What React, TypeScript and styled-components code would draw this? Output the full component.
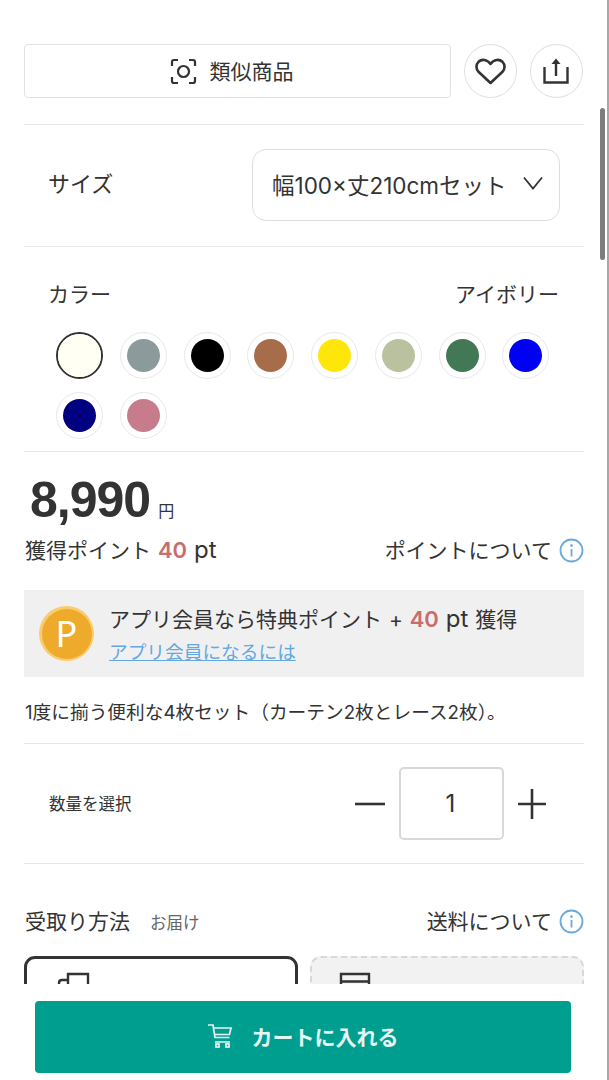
import styled, { createGlobalStyle } from "styled-components";

const colors = [
  "#fffff4",
  "#8d9a9b",
  "#000000",
  "#a76c49",
  "#ffe60a",
  "#bac19f",
  "#437857",
  "#0000f5",
  "#000080",
  "#c67c8d",
];

const InfoIcon = () => (
  <svg width="25" height="25" viewBox="0 0 25 25" fill="none">
    <circle cx="12.5" cy="12.5" r="11" stroke="#6aa9dc" strokeWidth="1.8" />
    <circle cx="12.5" cy="7.6" r="1.3" fill="#6aa9dc" />
    <path d="M12.5 11v7.5" stroke="#6aa9dc" strokeWidth="1.8" />
  </svg>
);

const App = () => {
  return (
    <Page>
      <GlobalStyle />
      <Main>
        <Toolbar>
          <SimilarButton>
            <svg width="27" height="27" viewBox="0 0 27 27" fill="none" stroke="#333" strokeWidth="2.2">
              <path d="M8 2H4Q2 2 2 4v4M19 2h4q2 0 2 2v4M2 19v4q0 2 2 2h4M25 19v4q0 2-2 2h-4" />
              <circle cx="13.5" cy="13.500" r="5.5" />
            </svg>
            類似商品
          </SimilarButton>
          <RoundButton>
            <svg width="31" height="27" viewBox="0 0 31 27" fill="none" stroke="#333" strokeWidth="2.6" strokeLinejoin="round">
              <path d="M15.500 25 3.500 13.800C.8 11 .8 6.500 3.500 3.800c3-2.800 8.500-2.800 12 2.200 3.500-5 9-5 12-2.200 2.700 2.700 2.700 7.200 0 10Z" />
            </svg>
          </RoundButton>
          <ShareButton>
            <svg width="26" height="26" viewBox="0 0 26 26" fill="none" stroke="#333" strokeWidth="2.400">
              <path d="M1.500 9v15.500h23V9M13 18V3" />
              <path d="M13 0.500 17.500 6h-9Z" fill="#333" stroke="none" />
            </svg>
          </ShareButton>
        </Toolbar>

        <SizeRow>
          <SizeLabel>サイズ</SizeLabel>
          <SizeSelect>
            幅100×丈210cmセット
            <svg width="20" height="14" viewBox="0 0 20 14" fill="none" stroke="#333" strokeWidth="1.800">
              <path d="M1 1.500 10 12.500 19 1.500" />
            </svg>
          </SizeSelect>
        </SizeRow>

        <ColorSection>
          <ColorHead>
            <span>カラー</span>
            <span>アイボリー</span>
          </ColorHead>
          <Swatches>
            {colors.map((color, i) => (
              <Swatch key={color} $selected={i === 0}>
                <SwatchDot $color={color} $selected={i === 0} />
              </Swatch>
            ))}
          </Swatches>
        </ColorSection>

        <PriceSection>
          <Price>
            8,990<Yen>円</Yen>
          </Price>
          <PointRow>
            <span>
              獲得ポイント <Red>40</Red> <Unit>pt</Unit>
            </span>
            <InfoLink>
              ポイントについて
              <InfoIcon />
            </InfoLink>
          </PointRow>
          <AppBox>
            <Coin>
              <CoinInner>P</CoinInner>
            </Coin>
            <AppText>
              <span>
                アプリ会員なら特典ポイント + <Red>40</Red> <Unit>pt</Unit> 獲得
              </span>
              <AppLink>アプリ会員になるには</AppLink>
            </AppText>
          </AppBox>
          <Note>1度に揃う便利な4枚セット（カーテン2枚とレース2枚）。</Note>
        </PriceSection>

        <QuantityRow>
          <QuantityLabel>数量を選択</QuantityLabel>
          <Stepper>
            <svg width="32" height="30" viewBox="0 0 32 30" stroke="#333" strokeWidth="2.600">
              <path d="M1 15h30" />
            </svg>
            <QuantityBox>1</QuantityBox>
            <svg width="30" height="32" viewBox="0 0 30 32" stroke="#333" strokeWidth="2.600">
              <path d="M1 16h28M15 1v30" />
            </svg>
          </Stepper>
        </QuantityRow>

        <DeliverySection>
          <DeliveryHead>
            <DeliveryTitle>
              受取り方法<small>お届け</small>
            </DeliveryTitle>
            <InfoLink>
              送料について
              <InfoIcon />
            </InfoLink>
          </DeliveryHead>
          <Cards>
            <Card>
              <svg width="34" height="40" viewBox="0 0 34 40" fill="none" stroke="#333" strokeWidth="2.400">
                <path d="M2 40V11q0-3 3-3h6M11 40V2h20v38" />
              </svg>
            </Card>
            <Card $disabled>
              <svg width="34" height="40" viewBox="0 0 34 40" fill="none" stroke="#333" strokeWidth="2.400">
                <path d="M3 40V3h28v37M3 10.500h28" />
              </svg>
            </Card>
          </Cards>
        </DeliverySection>
      </Main>

      <Footer>
        <CartButton>
          <svg width="24" height="24" viewBox="0 0 24 24" fill="none" stroke="#e6f5f3" strokeWidth="1.700">
            <path d="M0 1h5l2 12.500h14.500M6 4h17l-1.500 6.500H7M7 18h15" />
            <rect x="8" y="20" width="3" height="3" />
            <rect x="18" y="20" width="3" height="3" />
          </svg>
          カートに入れる
        </CartButton>
      </Footer>
      <Scrollbar />
    </Page>
  );
};

export default App;

const GlobalStyle = createGlobalStyle`
  html, body {
    margin: 0;
    padding: 0;
    background: #fff;
  }
  * {
    box-sizing: border-box;
  }
`;

const Page = styled.div`
  position: relative;
  width: 609px;
  height: 1080px;
  display: flex;
  flex-direction: column;
  overflow: hidden;
  background: #fff;
  color: #333;
  font-family: "Inter", "Noto Sans CJK JP", sans-serif;
  border-right: 2px solid #a8a8a8;
`;

const Main = styled.main`
  height: 984px;
  overflow: hidden;
  padding: 44px 24px 0 24px;
  width: 607px;
`;

const Toolbar = styled.div`
  display: flex;
  align-items: stretch;
  height: 54px;
  gap: 13px;
  width: 560px;
`;

const SimilarButton = styled.button`
  width: 427px;
  display: flex;
  align-items: center;
  justify-content: center;
  gap: 13px;
  padding: 0 12px 3px 0;
  background: #fff;
  border: 1px solid #e2e2e2;
  border-radius: 4px;
  color: #333;
  font: 400 21px "Noto Sans CJK JP", sans-serif;

  svg {
    margin-top: 3px;
  }
`;

const RoundButton = styled.button`
  width: 53px;
  display: flex;
  align-items: center;
  justify-content: center;
  padding: 0;
  background: #fff;
  border: 1px solid #e0e0e0;
  border-radius: 50%;
`;

const ShareButton = styled(RoundButton)`
  padding: 0 1px 1px 0;
`;

const SizeRow = styled.div`
  width: 560px;
  margin-top: 26px;
  height: 123px;
  display: flex;
  align-items: center;
  justify-content: space-between;
  padding: 0 24px 2px 24px;
  border-top: 1px solid #e6e6e6;
  border-bottom: 1px solid #e6e6e6;
`;

const SizeLabel = styled.span`
  font-size: 22px;
  margin-bottom: 6px;
`;

const SizeSelect = styled.div`
  width: 308px;
  height: 72px;
  display: flex;
  align-items: center;
  justify-content: space-between;
  padding: 0 16px 2px 19px;
  border: 1px solid #dedede;
  border-radius: 14px;
  font-size: 22.500px;
  white-space: nowrap;

  svg {
    margin-bottom: 2px;
  }
`;

const ColorSection = styled.section`
  width: 560px;
  height: 205px;
  padding: 32px 25px 0 24px;
  border-bottom: 1px solid #e6e6e6;
`;

const ColorHead = styled.div`
  display: flex;
  justify-content: space-between;
  font-size: 21px;
  line-height: 32px;
`;

const Swatches = styled.div`
  display: flex;
  flex-wrap: wrap;
  gap: 13px 16.750px;
  margin-top: 21px;
  padding-left: 8px;
`;

const Swatch = styled.div<{ $selected: boolean }>`
  width: 47px;
  height: 47px;
  display: flex;
  align-items: center;
  justify-content: center;
  border-radius: 50%;
  border: ${(p) => (p.$selected ? "2px solid #333" : "1px solid #e8e8e8")};
`;

const SwatchDot = styled.div<{ $color: string; $selected: boolean }>`
  width: ${(p) => (p.$selected ? "43px" : "33px")};
  height: ${(p) => (p.$selected ? "43px" : "33px")};
  border-radius: 50%;
  background: ${(p) => p.$color};
`;

const PriceSection = styled.section`
  width: 560px;
  height: 292px;
  border-bottom: 1px solid #e6e6e6;
`;

const Price = styled.div`
  height: 74px;
  padding: 13px 0 0 6px;
  font: 700 50px/70px "Liberation Sans", sans-serif;
  letter-spacing: -1px;
  color: #333;
`;

const Yen = styled.span`
  margin-left: 8px;
  font: 400 16px "Noto Sans CJK JP", sans-serif;
  letter-spacing: 0;
`;

const PointRow = styled.div`
  display: flex;
  justify-content: space-between;
  align-items: center;
  margin-top: 5px;
  height: 36px;
  padding-left: 1px;
  font-size: 21px;
  word-spacing: 1px;
`;

const Red = styled.span`
  color: #c76d6d;
  font-size: 22px;
  font-weight: 600;
`;

const Unit = styled.span`
  font-size: 24px;
`;

const InfoLink = styled.span`
  display: inline-flex;
  align-items: center;
  gap: 7px;
  font-size: 21px;

  svg {
    margin-top: 2px;
  }
`;

const AppBox = styled.div`
  height: 87px;
  margin-top: 23px;
  padding-left: 15px;
  display: flex;
  align-items: center;
  gap: 15px;
  background: #f0f0f0;
`;

const Coin = styled.div`
  width: 55px;
  height: 55px;
  display: flex;
  align-items: center;
  justify-content: center;
  flex: none;
  border-radius: 50%;
  background: #f9cd6f;
`;

const CoinInner = styled.div`
  width: 50px;
  height: 50px;
  display: flex;
  align-items: center;
  justify-content: center;
  border-radius: 50%;
  background: #eeaa2a;
  color: #fff;
  font: 400 36px "Noto Sans", sans-serif;
`;

const AppText = styled.div`
  display: flex;
  flex-direction: column;
  gap: 3px;
  padding-top: 4px;
  font-size: 21px;
  line-height: 30px;
  white-space: nowrap;
  word-spacing: 1px;
`;

const AppLink = styled.a`
  color: #64a8e0;
  font-size: 18.700px;
  line-height: 30px;
  text-decoration: underline;
`;

const Note = styled.p`
  margin: 22px 0 0 1px;
  font-size: 18.700px;
  line-height: 28px;
  white-space: nowrap;
`;

const QuantityRow = styled.section`
  width: 560px;
  height: 120px;
  display: flex;
  align-items: center;
  justify-content: space-between;
  padding: 0 37px 0 25px;
  border-bottom: 1px solid #e6e6e6;
`;

const QuantityLabel = styled.span`
  font-size: 16.500px;
  margin-bottom: 2px;
`;

const Stepper = styled.div`
  display: flex;
  align-items: center;
  gap: 13px;
`;

const QuantityBox = styled.div`
  width: 105px;
  height: 73px;
  display: flex;
  align-items: center;
  justify-content: center;
  padding-right: 2px;
  border: 2.500px solid #d8d8d8;
  border-radius: 5px;
  font: 400 24px "Inter", sans-serif;
`;

const DeliverySection = styled.section`
  width: 560px;
  padding-top: 38px;
`;

const DeliveryHead = styled.div`
  display: flex;
  justify-content: space-between;
  align-items: center;
  height: 36px;
  padding-left: 1px;
`;

const DeliveryTitle = styled.span`
  font-size: 21px;
  small {
    margin-left: 20px;
    font-size: 16.500px;
    color: #666;
  }
`;

const Cards = styled.div`
  display: grid;
  grid-template-columns: 274px 274px;
  gap: 12px;
  margin-top: 18px;
`;

const Card = styled.div<{ $disabled?: boolean }>`
  height: 120px;
  padding: ${(p) => (p.$disabled ? "13px 0 0 26px" : "13px 0 0 30px")};
  border-radius: 11px;
  border: ${(p) => (p.$disabled ? "2px dashed #d8d8d8" : "3px solid #333")};
  background: ${(p) => (p.$disabled ? "#f2f2f2" : "#fff")};
`;

const Footer = styled.footer`
  height: 96px;
  width: 607px;
  padding: 17px 0 0 35px;
  background: #fff;
`;

const CartButton = styled.button`
  width: 536px;
  height: 72px;
  display: flex;
  align-items: center;
  justify-content: center;
  gap: 20px;
  padding: 0 0 2px 0;
  border: none;
  border-radius: 4px;
  background: #009e8f;
  color: #e6f5f3;
  font: 700 21px "Noto Sans CJK JP", sans-serif;
`;

const Scrollbar = styled.div`
  position: absolute;
  top: 108px;
  left: 600px;
  width: 5px;
  height: 152px;
  border-radius: 3px;
  background: #7d7d7d;
`;
